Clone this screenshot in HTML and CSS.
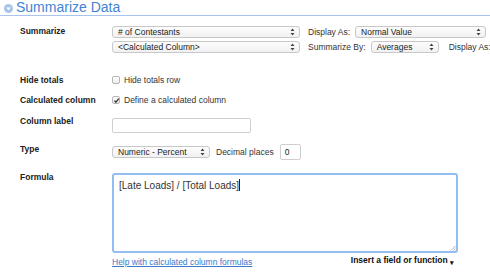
FILE: index.html
```html
<!DOCTYPE html>
<html lang="en">
<head>
    <meta charset="UTF-8">
    <title>Summarize Data</title>
    <link rel="stylesheet" href="styles.css">
</head>
<body>
    <div class="section-head">
        <svg class="twisty" width="9" height="9" viewBox="0 0 9 9">
            <circle cx="4.5" cy="4.5" r="4.5" fill="#a8c4ea"/>
            <path d="M2.2 3.4 L6.8 3.4 L4.5 6.2 Z" fill="#fff"/>
        </svg>
        <span class="section-title">Summarize Data</span>
    </div>

    <div class="form">
        <div class="row row-summarize">
            <div class="label">Summarize</div>
            <div class="controls">
                <div class="line">
                    <div class="select w-field"># of Contestants<span class="arrows"><svg width="5" height="8" viewBox="0 0 5 8"><path d="M0.5 3 L2.5 0.5 L4.5 3 Z M0.5 5 L2.5 7.5 L4.5 5 Z" fill="#444"/></svg></span></div>
                    <span class="text">Display As:</span>
                    <div class="select w-display">Normal Value<span class="arrows"><svg width="5" height="8" viewBox="0 0 5 8"><path d="M0.5 3 L2.5 0.5 L4.5 3 Z M0.5 5 L2.5 7.5 L4.5 5 Z" fill="#444"/></svg></span></div>
                </div>
                <div class="line">
                    <div class="select w-field">&lt;Calculated Column&gt;<span class="arrows"><svg width="5" height="8" viewBox="0 0 5 8"><path d="M0.5 3 L2.5 0.5 L4.5 3 Z M0.5 5 L2.5 7.5 L4.5 5 Z" fill="#444"/></svg></span></div>
                    <span class="text">Summarize By:</span>
                    <div class="select w-avg">Averages<span class="arrows"><svg width="5" height="8" viewBox="0 0 5 8"><path d="M0.5 3 L2.5 0.5 L4.5 3 Z M0.5 5 L2.5 7.5 L4.5 5 Z" fill="#444"/></svg></span></div>
                    <span class="text text-gap">Display As:</span>
                </div>
            </div>
        </div>

        <div class="row row-hide">
            <div class="label">Hide totals</div>
            <div class="controls check-line">
                <span class="checkbox"></span>
                <span>Hide totals row</span>
            </div>
        </div>

        <div class="row row-calc">
            <div class="label">Calculated column</div>
            <div class="controls check-line">
                <span class="checkbox checked">
                    <svg width="7" height="7" viewBox="0 0 7 7"><path d="M1.4 3.6 L2.9 5.2 L5.7 1.6" stroke="#333" stroke-width="1.3" fill="none"/></svg>
                </span>
                <span>Define a calculated column</span>
            </div>
        </div>

        <div class="row row-colname">
            <div class="label">Column label</div>
            <div class="controls">
                <div class="input w-label"></div>
            </div>
        </div>

        <div class="row row-type">
            <div class="label">Type</div>
            <div class="controls type-line">
                <div class="select w-type">Numeric - Percent<span class="arrows"><svg width="5" height="8" viewBox="0 0 5 8"><path d="M0.5 3 L2.5 0.5 L4.5 3 Z M0.5 5 L2.5 7.5 L4.5 5 Z" fill="#444"/></svg></span></div>
                <span class="text-tight">Decimal places</span>
                <div class="input w-dec">0</div>
            </div>
        </div>

        <div class="row row-formula">
            <div class="label">Formula</div>
            <div class="controls">
                <div class="textarea">[Late Loads] / [Total Loads]<span class="caret"></span>
                    <svg class="grip" width="6" height="6" viewBox="0 0 6 6"><path d="M5.5 1 L1 5.5 M5.5 3.5 L3.5 5.5" stroke="#999" stroke-width="0.8"/></svg>
                </div>
                <div class="formula-foot">
                    <a class="help" href="#">Help with calculated column formulas</a>
                    <span class="insert">Insert a field or function <span class="drop">▾</span></span>
                </div>
            </div>
        </div>
    </div>
</body>
</html>
```

FILE: styles.css
```css
body{
    margin: 0;
    font-family: "Liberation Sans", Arial, sans-serif;
    font-size: 8.5px;
    color: #222;
    background: #fff;
}

.section-head{
    height: 15px;
    display: flex;
    align-items: center;
    padding-left: 4px;
    border-bottom: 1px solid #a9c3ea;
}
.twisty{
    margin-right: 3px;
    margin-top: 1px;
}
.section-title{
    font-size: 14px;
    color: #4583d3;
    line-height: 15px;
}

.form{
    padding-left: 20px;
}
.row{
    display: grid;
    grid-template-columns: 92px 1fr;
}
.label{
    font-weight: bold;
    color: #222;
    line-height: 12px;
    white-space: nowrap;
}

.row-summarize{ margin-top: 10px; }
.row-hide{ margin-top: 21px; }
.row-calc{ margin-top: 8px; }
.row-colname{ margin-top: 12px; }
.row-type{ margin-top: 13px; }
.row-formula{ margin-top: 15px; }

.row-summarize .label{ line-height: 11px; }
.row-colname .label{ line-height: 7px; }
.row-type .label{ line-height: 7px; }
.row-formula .label{ line-height: 8px; }

.controls{
    display: flex;
    flex-direction: column;
    gap: 3px;
}
.line{
    display: flex;
    align-items: center;
    height: 12px;
    white-space: nowrap;
}

.select{
    position: relative;
    flex: none;
    height: 12px;
    box-sizing: border-box;
    border: 1px solid #c8c8c8;
    border-radius: 3px;
    background: linear-gradient(#fdfdfd, #f1f1f1);
    padding-left: 5px;
    line-height: 10px;
    font-size: 8.5px;
    color: #222;
    white-space: nowrap;
}
.arrows{
    position: absolute;
    right: 4px;
    top: 1px;
    line-height: 0;
}
.w-field{ width: 188px; }
.w-display{ width: 131px; }
.w-avg{ width: 68px; }
.w-type{ width: 98px; }

.text{
    flex: none;
    margin-left: 8px;
    margin-right: 5px;
    color: #333;
}
.text-gap{
    margin-left: 10px;
}

.check-line{
    flex-direction: row;
    align-items: center;
    gap: 4px;
    height: 12px;
    color: #333;
}
.checkbox{
    width: 6px;
    height: 6px;
    border: 1px solid #b5b5b5;
    border-radius: 2px;
    background: linear-gradient(#fff, #ececec);
    display: flex;
    align-items: center;
    justify-content: center;
}
.checkbox svg{
    flex: none;
}

.input{
    box-sizing: border-box;
    border: 1px solid #cfcfcf;
    border-radius: 2px;
    background: #fff;
}
.w-label{
    width: 139px;
    height: 15px;
}

.type-line{
    flex-direction: row;
    align-items: center;
    height: 12px;
}
.text-tight{
    margin-left: 3px;
    margin-right: 3px;
    color: #333;
    white-space: nowrap;
}
.w-dec{
    flex: none;
    width: 21px;
    height: 16px;
    padding-left: 4px;
    line-height: 14px;
    font-size: 8.5px;
    color: #222;
}

.textarea{
    position: relative;
    box-sizing: border-box;
    width: 346px;
    height: 80px;
    border: 2px solid #93bcf1;
    border-radius: 3px;
    padding: 4px 5px;
    font-size: 10px;
    line-height: 13px;
    color: #333;
}
.caret{
    display: inline-block;
    width: 1px;
    height: 12px;
    background: #222;
    vertical-align: -2px;
}
.grip{
    position: absolute;
    right: 0;
    bottom: 0;
}

.formula-foot{
    width: 346px;
    display: flex;
    justify-content: space-between;
    align-items: center;
    margin-top: -2px;
    line-height: 12px;
}
.help{
    color: #3a78c9;
    text-decoration: underline;
}
.insert{
    font-weight: bold;
    color: #111;
    padding-right: 4px;
}
.drop{
    font-size: 7px;
    vertical-align: -2px;
}
```
